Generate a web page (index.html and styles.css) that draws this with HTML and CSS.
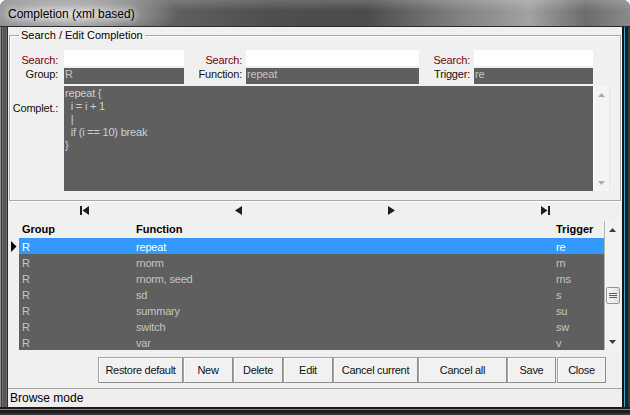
FILE: index.html
```html
<!DOCTYPE html>
<html>
<head>
<meta charset="utf-8">
<title>Completion (xml based)</title>
<link rel="stylesheet" href="styles.css">
</head>
<body>
<div class="window">
  <div class="titlebar"><span class="title">Completion (xml based)</span></div>
  <div class="frame-l"></div>
  <div class="client">
    <fieldset class="groupbox">
      <legend>Search / Edit Completion</legend>
      <div class="form">
        <label class="lbl search row-start">Search:</label><div class="field white"></div>
        <label class="lbl search">Search:</label><div class="field white"></div>
        <label class="lbl search">Search:</label><div class="field white"></div>
        <label class="lbl row-start">Group:</label><div class="field dark">R</div>
        <label class="lbl">Function:</label><div class="field dark">repeat</div>
        <label class="lbl">Trigger:</label><div class="field dark">re</div>
        <label class="lbl memo-lbl row-start">Complet.:</label>
        <div class="memo">
          <div class="memo-text">repeat {
  i = i + 1
  |
  if (i == 10) break
}</div>
          <div class="vscroll light">
            <div class="sbtn"><svg width="7" height="4" viewBox="0 0 7 4"><path d="M0 4L3.5 0L7 4z"/></svg></div>
            <div class="track"></div>
            <div class="sbtn"><svg width="7" height="4" viewBox="0 0 7 4"><path d="M0 0L3.5 4L7 0z"/></svg></div>
          </div>
        </div>
      </div>
    </fieldset>

    <div class="nav">
      <div class="navbtn"><svg width="9" height="9" viewBox="0 0 9 9"><rect x="0" y="0" width="2" height="9"/><path d="M9 0L2.5 4.5L9 9z"/></svg></div>
      <div class="navbtn"><svg width="7" height="9" viewBox="0 0 7 9"><path d="M7 0L0 4.5L7 9z"/></svg></div>
      <div class="navbtn"><svg width="7" height="9" viewBox="0 0 7 9"><path d="M0 0L7 4.5L0 9z"/></svg></div>
      <div class="navbtn"><svg width="9" height="9" viewBox="0 0 9 9"><path d="M0 0L6.5 4.5L0 9z"/><rect x="7" y="0" width="2" height="9"/></svg></div>
    </div>

    <div class="grid">
      <div class="table">
        <div class="row head"><span class="ind"></span><span class="cell">Group</span><span class="cell">Function</span><span class="cell">Trigger</span></div>
        <div class="row sel"><span class="ind"><svg width="6" height="11" viewBox="0 0 6 11"><path d="M0 0L5.5 5.5L0 11z"/></svg></span><span class="cell">R</span><span class="cell">repeat</span><span class="cell">re</span></div>
        <div class="row"><span class="ind"></span><span class="cell">R</span><span class="cell">rnorm</span><span class="cell">rn</span></div>
        <div class="row"><span class="ind"></span><span class="cell">R</span><span class="cell">rnorm, seed</span><span class="cell">rns</span></div>
        <div class="row"><span class="ind"></span><span class="cell">R</span><span class="cell">sd</span><span class="cell">s</span></div>
        <div class="row"><span class="ind"></span><span class="cell">R</span><span class="cell">summary</span><span class="cell">su</span></div>
        <div class="row"><span class="ind"></span><span class="cell">R</span><span class="cell">switch</span><span class="cell">sw</span></div>
        <div class="row"><span class="ind"></span><span class="cell">R</span><span class="cell">var</span><span class="cell">v</span></div>
      </div>
      <div class="vscroll dark-arrows">
        <div class="sbtn"><svg width="7" height="4" viewBox="0 0 7 4"><path d="M0 4L3.5 0L7 4z"/></svg></div>
        <div class="track"><div class="thumb"><svg width="8" height="5" viewBox="0 0 8 5"><path d="M0 .5h8M0 2.5h8M0 4.5h8" stroke="#5c5c5c" stroke-width="1"/></svg></div></div>
        <div class="sbtn"><svg width="7" height="4" viewBox="0 0 7 4"><path d="M0 0L3.5 4L7 0z"/></svg></div>
      </div>
    </div>

    <div class="buttons">
      <button class="btn w-rd">Restore default</button>
      <button class="btn w-s">New</button>
      <button class="btn w-s">Delete</button>
      <button class="btn w-s">Edit</button>
      <button class="btn w-rd">Cancel current</button>
      <button class="btn w-ca">Cancel all</button>
      <button class="btn w-sv">Save</button>
      <button class="btn w-sv gap">Close</button>
    </div>

    <div class="status">Browse mode</div>
  </div>
  <div class="frame-r"></div>
  <div class="frame-b"></div>
</div>
</body>
</html>
```

FILE: styles.css
```css
* { box-sizing: border-box; }

body {
  margin: 0;
  background: #ffffff;
  font-family: "Liberation Sans", Arial, sans-serif;
}

.window {
  width: 630px;
  height: 415px;
  display: grid;
  grid-template-columns: 8px 614px 8px;
  grid-template-rows: 27px 380px 8px;
  border-radius: 7px 7px 0 0;
  overflow: hidden;
  background: #4a4a4a;
}

.titlebar {
  grid-column: 1 / -1;
  padding-left: 8px;
  background:
    radial-gradient(ellipse 110px 26px at 70px 14px, rgba(215,215,215,0.95), rgba(215,215,215,0) 100%),
    linear-gradient(180deg, rgba(255,255,255,0.18), rgba(255,255,255,0) 40%),
    linear-gradient(90deg, #7c7c7c 0%, #666 22%, #4f4f4f 42%, #4b4b4b 58%, #7e7e7e 72%, #a2a2a2 84%, #6c6c6c 93%, #8a8a8a 100%);
  box-shadow: inset 0 -1px #2c2c2c;
}

.title {
  display: inline-block;
  font-size: 12px;
  line-height: 25px;
  padding-top: 2px;
  color: #000;
  text-shadow: 0 0 6px rgba(255,255,255,0.9), 0 0 10px rgba(255,255,255,0.7);
}

.frame-l {
  background: linear-gradient(90deg, #8e8e8e 0 1px, #3c3c3c 1px 2px, #6e6e6e 2px 3px, #555 3px 6px, #6a6a6a 6px 7px, #2a2a2a 7px 8px);
}

.frame-r {
  background: linear-gradient(90deg, #141414 0 2px, #2aa8d8 2px 3px, #1c1c1c 3px 6px, #3a3a3a 6px 8px);
}

.frame-b {
  grid-column: 1 / -1;
  background: linear-gradient(180deg, #1a1a1a 0 2px, #2aa8d8 2px 3px, #1c1c1c 3px 6px, #333 6px 8px);
}

.client {
  background: #f0f0f0;
  display: flex;
  flex-direction: column;
  font-size: 11px;
  letter-spacing: -0.2px;
}

/* group box */
.groupbox {
  margin: 2px 1px 0 1px;
  padding: 8px 0 9px 0;
  border: 1px solid #a8a8a8;
  box-shadow: 1px 1px 0 #ffffff, inset 1px 1px 0 #ffffff;
  min-width: 0;
}

.groupbox legend {
  margin-left: 9px;
  padding: 0 2px;
  font-size: 11px;
  line-height: 13px;
  color: #000;
  letter-spacing: 0;
}

.form {
  display: grid;
  grid-template-columns: 54px 120px 62px 173px 55px 119px 17px;
  grid-template-rows: 16px 16px 105px;
  row-gap: 2px;
}

.row-start { grid-column-start: 1; }

.lbl {
  text-align: right;
  padding-right: 4px;
  line-height: 12px;
  color: #111;
  white-space: nowrap;
}
.lbl.row-start { padding-right: 6px; }

.lbl.search {
  color: #800000;
  line-height: 16px;
  padding-top: 2px;
}

.field {
  padding-left: 1px;
  line-height: 12px;
  white-space: nowrap;
  overflow: hidden;
}
.field.white { background: #ffffff; }
.field.dark { background: #5f5f5f; color: #c4c4c4; }

.memo-lbl {
  line-height: 13px;
  padding-top: 16px;
}

.memo {
  grid-column: 2 / 8;
  display: flex;
}

.memo-text {
  flex: 1;
  background: #5f5f5f;
  color: #cfcfcf;
  white-space: pre;
  line-height: 13px;
  padding: 1px 0 0 1px;
}

/* scrollbars */
.vscroll {
  width: 17px;
  display: flex;
  flex-direction: column;
  background: #f4f4f4;
}
.vscroll.light {
  border-left: 1px solid #ffffff;
  border-right: 1px solid #e6e6e6;
}
.vscroll.light svg { fill: #a9a9a9; }
.vscroll.dark-arrows svg { fill: #3e3e3e; }

.sbtn {
  height: 17px;
  display: flex;
  align-items: center;
  justify-content: center;
}
.track { flex: 1; }

.vscroll.dark-arrows {
  width: 16px;
  border-left: 1px solid #b4b4b4;
  background: #f2f2f2;
}
.vscroll.dark-arrows .track { padding-top: 49px; }

.thumb {
  height: 17px;
  margin: 0 0 0 1px;
  width: 14px;
  border: 1px solid #959595;
  border-radius: 2px;
  background: linear-gradient(90deg, #fafafa, #e2e2e2);
  display: flex;
  align-items: center;
  justify-content: center;
}

/* navigator */
.nav {
  height: 20px;
  display: grid;
  grid-template-columns: repeat(4, 1fr);
  align-items: center;
  justify-items: center;
  padding-bottom: 1px;
}
.navbtn svg { display: block; fill: #1e1e1e; }

/* data grid */
.grid {
  height: 129px;
  margin-right: 2px;
  display: flex;
}

.table { width: 596px; }

.row {
  display: grid;
  grid-template-columns: 11px 114px 420px 51px;
  height: 16px;
}

.row .cell {
  background: #5f5f5f;
  color: #c4c4c4;
  line-height: 15px;
  padding: 2px 0 0 3px;
  white-space: nowrap;
  overflow: hidden;
}

.row .ind {
  display: flex;
  align-items: center;
  padding-left: 3px;
}
.row .ind svg { fill: #000; }

.row.head { height: 17px; }
.row.head .cell {
  background: transparent;
  color: #000;
  font-weight: bold;
  line-height: 17px;
  padding-top: 0;
  letter-spacing: 0;
}

.row.sel .cell {
  background: #3399ff;
  color: #ffffff;
}

/* buttons */
.buttons {
  margin-top: 7px;
  height: 26px;
  display: flex;
  justify-content: flex-end;
  padding-right: 16px;
}

.btn {
  height: 26px;
  margin: 0;
  padding: 0;
  font-family: "Liberation Sans", Arial, sans-serif;
  font-size: 11px;
  letter-spacing: -0.3px;
  color: #111;
  background: #f1f1f1;
  border: 1px solid #a3a3a3;
  border-right-color: #8e8e8e;
  border-bottom-color: #8e8e8e;
  box-shadow: inset 1px 1px 0 #fdfdfd;
  border-radius: 0;
}
.w-rd { width: 85px; }
.w-s { width: 50px; }
.w-ca { width: 89px; }
.w-sv { width: 49px; }
.gap { margin-left: 1px; }

/* status bar */
.status {
  margin-top: 5px;
  flex: 1;
  border-top: 1px solid #a0a0a0;
  background: #f0eded;
  font-size: 12px;
  letter-spacing: 0;
  line-height: 17px;
  padding: 1px 0 0 2px;
  color: #000;
}
```
